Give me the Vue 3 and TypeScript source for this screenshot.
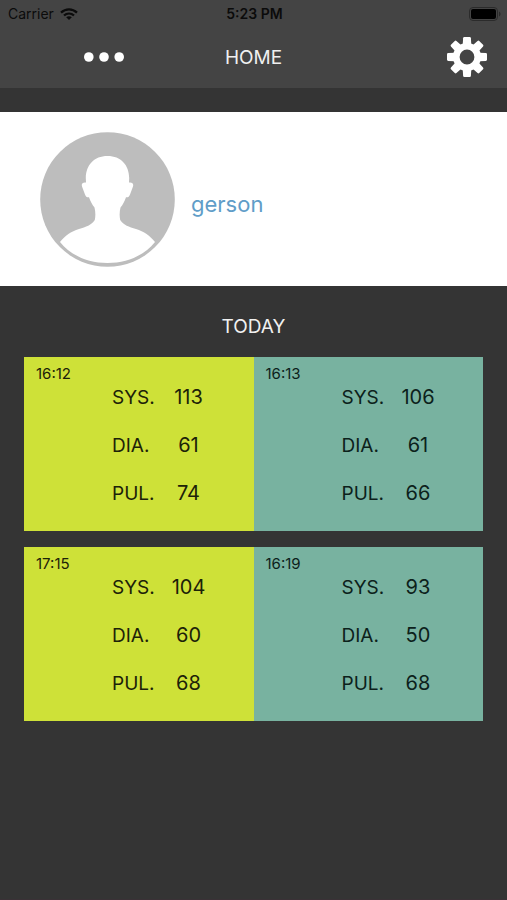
<script setup lang="ts">
interface Reading {
  time: string
  tone: 'lime' | 'teal'
  values: { label: string; value: number }[]
}

const reading = (time: string, tone: Reading['tone'], sys: number, dia: number, pul: number): Reading => ({
  time,
  tone,
  values: [
    { label: 'SYS.', value: sys },
    { label: 'DIA.', value: dia },
    { label: 'PUL.', value: pul },
  ],
})

const rows: Reading[][] = [
  [reading('16:12', 'lime', 113, 61, 74), reading('16:13', 'teal', 106, 61, 66)],
  [reading('17:15', 'lime', 104, 60, 68), reading('16:19', 'teal', 93, 50, 68)],
]

const toothAngles: number[] = [0, 45, 90, 135, 180, 225, 270, 315]
</script>

<template>
  <div class="screen">
    <header class="top">
      <div class="status">
        <div class="carrier">
          <span>Carrier</span>
          <svg class="wifi" viewBox="0 0 18 12" aria-hidden="true">
            <g fill="none" stroke="#0b0b0b" stroke-width="2.3">
              <path d="M1 4.6C5.6.3 12.4.3 17 4.6" />
              <path d="M4 7.5c2.9-2.6 7.1-2.6 10 0" />
            </g>
            <path fill="#0b0b0b" d="M9 12 6.2 9.3c1.6-1.4 4-1.4 5.6 0z" />
          </svg>
        </div>
        <span class="clock">5:23 PM</span>
        <svg class="battery" viewBox="0 0 32 14" aria-hidden="true">
          <rect x=".5" y=".5" width="28" height="13" rx="3.5" fill="none" stroke="#2b2b2b" />
          <rect x="2" y="2" width="25" height="10" rx="2" fill="#000" />
          <path d="M30 4.5c2 .8 2 4.200 0 5z" fill="#2b2b2b" />
        </svg>
      </div>
      <nav class="bar">
        <button class="icon-button more" type="button" aria-label="More">
          <svg class="dots" viewBox="0 0 40 10" aria-hidden="true">
            <g fill="#fff">
              <circle cx="4.800" cy="5" r="4.800" />
              <circle cx="20" cy="5" r="4.800" />
              <circle cx="35.200" cy="5" r="4.800" />
            </g>
          </svg>
        </button>
        <h1 class="title">HOME</h1>
        <button class="icon-button settings" type="button" aria-label="Settings">
          <svg class="gear" viewBox="-20 -20 40 40" aria-hidden="true">
            <circle r="10.700" fill="none" stroke="#fff" stroke-width="6.600" />
            <path
              v-for="angle in toothAngles"
              :key="angle"
              :transform="`rotate(${angle})`"
              d="M-4.300-12-3.900-18.800Q-3.800-20-2.700-20H2.700Q3.800-20 3.900-18.800L4.300-12z"
              fill="#fff"
            />
          </svg>
        </button>
      </nav>
    </header>

    <main>
      <section class="profile">
        <svg class="avatar" viewBox="0 0 135 135" aria-hidden="true">
          <circle cx="67.500" cy="67.500" r="67.300" fill="#bdbdbd" />
          <path
            fill="#fff"
            d="M67.500 24C54 24 46 33 45.800 46L46 50.500C42.800 50 41.200 51.500 42 54.500L45 62.500C45.800 64.800 47 65.500 49 65.300C50.500 69.500 52 72.500 54.500 75.500C55.600 80 55.600 84 54.800 88C51.500 93 46 95 39 97C31 99.300 25 104 20 110C31 123.500 48 131 67.500 131S104 123.500 115 110C110 104 104 99.300 96 97C89 95 83.500 93 80.200 88C79.400 84 79.400 80 80.500 75.500C83 72.500 84.500 69.500 86 65.300C88 65.500 89.200 64.800 90 62.500L93 54.500C93.800 51.500 92.200 50 89 50.500L89.200 46C89 33 81 24 67.500 24z"
          />
        </svg>
        <a class="name" href="#">gerson</a>
      </section>

      <section class="today">
        <h2 class="heading">TODAY</h2>
        <div v-for="(row, i) in rows" :key="i" class="row">
          <article v-for="item in row" :key="item.time" class="reading" :class="item.tone">
            <time class="time">{{ item.time }}</time>
            <dl class="values">
              <div v-for="entry in item.values" :key="entry.label" class="entry">
                <dt>{{ entry.label }}</dt>
                <dd>{{ entry.value }}</dd>
              </div>
            </dl>
          </article>
        </div>
      </section>
    </main>
  </div>
</template>

<style>
body {
  margin: 0;
  background: #343434;
}
</style>

<style scoped>
.screen {
  box-sizing: border-box;
  min-height: 100vh;
  background: #343434;
  border-bottom: 1px solid #3a3136;
  font-family: Inter, "Liberation Sans", sans-serif;
}
.top {
  background: #444;
}
.status {
  display: grid;
  grid-template-columns: 1fr auto 1fr;
  align-items: center;
  height: 27px;
  padding: 0 6px 0 8px;
  font-size: 14px;
  color: #0b0b0b;
}
.carrier {
  display: flex;
  align-items: center;
  gap: 6px;
}
.wifi {
  width: 18px;
  height: 12px;
}
.clock {
  font-weight: 600;
}
.battery {
  justify-self: end;
  width: 32px;
  height: 14px;
}
.bar {
  display: grid;
  grid-template-columns: 1fr auto 1fr;
  align-items: center;
  height: 60px;
  padding: 0 20px 1px;
}
.icon-button {
  display: flex;
  padding: 0;
  border: 0;
  background: none;
  cursor: pointer;
}
.more {
  justify-self: start;
  margin-left: 64px;
}
.settings {
  justify-self: end;
}
.dots {
  width: 40px;
  height: 10px;
}
.gear {
  width: 40px;
  height: 40px;
}
.title,
.heading {
  margin: 0;
  font-size: 19px;
  line-height: 25px;
  font-weight: 400;
  color: #f0f0f0;
  text-align: center;
}
.profile {
  box-sizing: border-box;
  display: flex;
  align-items: center;
  gap: 16px;
  min-height: 174px;
  margin-top: 24px;
  padding: 0 40px;
  background: #fff;
}
.avatar {
  width: 135px;
  height: 135px;
}
.name {
  padding-top: 10px;
  font-size: 22px;
  line-height: 28px;
  color: #609dc8;
  text-decoration: none;
}
.today {
  display: flex;
  flex-direction: column;
  gap: 16px;
  padding: 28px 24px;
}
.heading {
  margin-bottom: 2px;
}
.row {
  display: grid;
  grid-template-columns: 1fr 1fr;
}
.reading {
  box-sizing: border-box;
  display: grid;
  grid-template-columns: 88px 1fr;
  min-height: 174px;
}
.lime {
  background: #cee138;
  color: #1c2208;
}
.teal {
  background: #78b2a0;
  color: #0c211b;
}
.time {
  padding: 8px 0 0 12px;
  font-size: 15px;
  line-height: 18px;
}
.values {
  display: grid;
  grid-template-rows: repeat(3, 1fr);
  margin: 0;
  padding: 17px 0 14px;
}
.entry {
  display: grid;
  grid-template-columns: 50px 53px;
  align-items: baseline;
  align-content: center;
  font-size: 20px;
  line-height: 24px;
}
.entry dt {
  font-size: 19px;
}
.entry dd {
  margin: 0;
  text-align: center;
}
</style>
